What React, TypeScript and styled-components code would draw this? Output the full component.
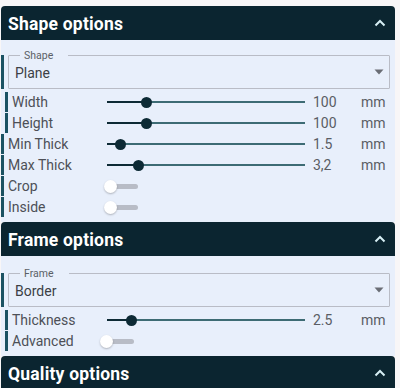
import * as React from "react";
import styled, { createGlobalStyle } from "styled-components";

const GlobalStyle = createGlobalStyle`
  html, body {
    margin: 0;
    padding: 0;
    background: #f8f6f7;
    font-family: Roboto, "Noto Sans", Arial, sans-serif;
  }
  * { box-sizing: border-box; }
`;

type SliderRow = {
  kind: "slider";
  label: string;
  value: string;
  unit: string;
  percent: number;
  indent?: boolean;
};

type ToggleRow = {
  kind: "toggle";
  label: string;
  indent?: boolean;
  offset?: number;
};

type Row = SliderRow | ToggleRow;

const shapeRows: Row[] = [
  { kind: "slider", label: "Width", value: "100", unit: "mm", percent: 19.7, indent: true },
  { kind: "slider", label: "Height", value: "100", unit: "mm", percent: 19.7, indent: true },
  { kind: "slider", label: "Min Thick", value: "1.5", unit: "mm", percent: 7 },
  { kind: "slider", label: "Max Thick", value: "3,2", unit: "mm", percent: 15.7 },
  { kind: "toggle", label: "Crop" },
  { kind: "toggle", label: "Inside" },
];

const frameRows: Row[] = [
  { kind: "slider", label: "Thickness", value: "2.5", unit: "mm", percent: 12.5, indent: true },
  { kind: "toggle", label: "Advanced", indent: true, offset: -4 },
];

function ChevronUp() {
  return (
    <svg width="12" height="8" viewBox="0 0 12 8">
      <path d="M1.5 6.5 L6 2 L10.5 6.5" fill="none" stroke="#d6eef4" strokeWidth="2" />
    </svg>
  );
}

function Caret() {
  return (
    <svg width="10" height="6" viewBox="0 0 10 6">
      <path d="M0.5 0.5 H9.5 L5 5.5 Z" fill="#6a6d75" />
    </svg>
  );
}

function OptionRow({ row }: { row: Row }) {
  return (
    <RowBox $indent={row.indent}>
      <Label $indent={row.indent}>{row.label}</Label>
      {row.kind === "slider" ? (
        <>
          <Track>
            <Fill style={{ width: `${row.percent}%` }} />
            <Thumb />
            <Rest />
          </Track>
          <Value>{row.value}</Value>
          <Unit>{row.unit}</Unit>
        </>
      ) : (
        <Switch style={{ marginLeft: row.offset ?? 0 }}>
          <Knob />
        </Switch>
      )}
    </RowBox>
  );
}

function Section({
  title,
  selectLabel,
  selectValue,
  rows,
  top = 15,
  bottom = 5,
}: {
  title: string;
  selectLabel?: string;
  selectValue?: string;
  rows?: Row[];
  top?: number;
  bottom?: number;
}) {
  return (
    <>
      <Header>
        <HeaderTitle>{title}</HeaderTitle>
        <ChevronUp />
      </Header>
      {rows && (
        <Body $top={top} $bottom={bottom}>
          <SelectRow>
            <Field>
              <Legend>{selectLabel}</Legend>
              <SelectValue>{selectValue}</SelectValue>
              <Caret />
            </Field>
          </SelectRow>
          {rows.map((r) => (
            <OptionRow key={r.label} row={r} />
          ))}
        </Body>
      )}
    </>
  );
}

export default function App() {
  return (
    <>
      <GlobalStyle />
      <Page>
        <Panel>
          <Section title="Shape options" selectLabel="Shape" selectValue="Plane" rows={shapeRows} />
          <Section
            title="Frame options"
            selectLabel="Frame"
            selectValue="Border"
            rows={frameRows}
            top={17}
            bottom={5}
          />
          <Section title="Quality options" />
        </Panel>
      </Page>
    </>
  );
}

const Page = styled.div`
  padding: 6px 0 0 1px;
  height: 388px;
  overflow: hidden;
`;

const Panel = styled.div`
  width: 394px;
  display: flex;
  flex-direction: column;
`;

const Header = styled.div`
  height: 34px;
  background: #0b2530;
  display: flex;
  align-items: center;
  justify-content: space-between;
  padding: 0 9px 0 7px;
  border-radius: 4px 4px 0 0;
`;

const HeaderTitle = styled.div`
  color: #ffffff;
  font-size: 17.5px;
  font-weight: 700;
  letter-spacing: 0.2px;
  padding-top: 1px;
`;

const Body = styled.div<{ $top: number; $bottom: number }>`
  background: #e8effb;
  padding: ${(p) => p.$top}px 0 ${(p) => p.$bottom}px 0;
  display: flex;
  flex-direction: column;
  gap: 1px;
`;

const SelectRow = styled.div`
  border-left: 3px solid #1b5262;
  padding: 0 5px 0 4px;
  margin-bottom: 2px;
`;

const Field = styled.fieldset`
  margin: 0;
  height: 34px;
  border: 1px solid #b9bcc6;
  border-radius: 1px;
  padding: 0 5px 0 6px;
  display: flex;
  align-items: center;
  justify-content: space-between;
  position: relative;
  min-width: 0;
`;

const Legend = styled.legend`
  font-size: 10.5px;
  color: #5b5f66;
  padding: 0 15px 0 4px;
  margin-left: 5px;
  line-height: 10px;
  position: absolute;
  top: -5px;
  background: #e8effb;
`;

const SelectValue = styled.div`
  font-size: 14px;
  color: #3c3f45;
  padding-top: 2px;
`;

const RowBox = styled.div<{ $indent?: boolean }>`
  height: 20px;
  display: flex;
  align-items: center;
  margin-left: ${(p) => (p.$indent ? "4px" : "0")};
  border-left: 3px solid #1b5262;
  padding-left: 4px;
`;

const Label = styled.div<{ $indent?: boolean }>`
  width: ${(p) => (p.$indent ? "95px" : "99px")};
  font-size: 14px;
  color: #4d5057;
  white-space: nowrap;
  flex: none;
`;

const Track = styled.div`
  width: 198px;
  height: 12px;
  display: flex;
  align-items: center;
  flex: none;
`;

const Fill = styled.div`
  height: 2px;
  background: #0d2a35;
`;

const Thumb = styled.div`
  width: 11px;
  height: 11px;
  border-radius: 50%;
  background: #0d2a35;
  margin: 0 -5.5px;
  position: relative;
  z-index: 1;
  flex: none;
`;

const Rest = styled.div`
  flex: 1;
  height: 1.5px;
  background: #3d6b74;
`;

const Value = styled.div`
  width: 48px;
  margin-left: 8px;
  font-size: 14px;
  color: #5a5d64;
`;

const Unit = styled.div`
  font-size: 14px;
  color: #5a5d64;
`;

const Switch = styled.div`
  width: 31px;
  height: 5px;
  border-radius: 3px;
  background: #b8bcc6;
  display: flex;
  align-items: center;
  flex: none;
`;

const Knob = styled.div`
  width: 13px;
  height: 13px;
  border-radius: 50%;
  background: #ffffff;
  box-shadow: 0 1px 2px rgba(0, 0, 0, 0.25);
  margin-left: -3px;
`;
